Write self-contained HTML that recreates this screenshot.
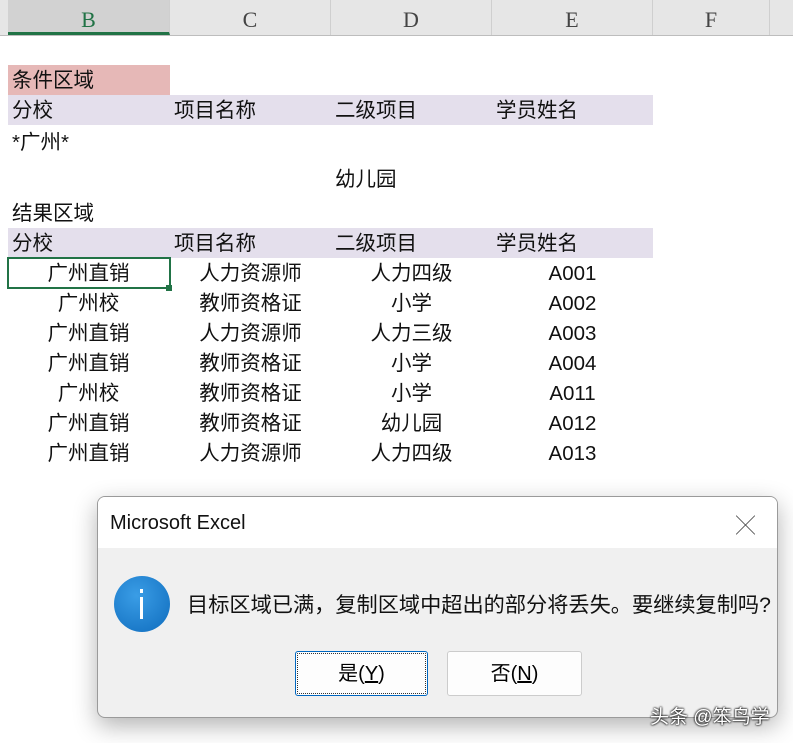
<!DOCTYPE html><html><head><meta charset="utf-8"><style>
body{margin:0;width:793px;height:743px;background:#fff;position:relative;overflow:hidden;font-family:"Liberation Sans","Noto Sans CJK SC",sans-serif;}
.hdr{position:absolute;top:0;left:0;width:793px;height:35px;background:#e6e6e6;border-bottom:1px solid #bdbdbd}
.h{position:absolute;top:0;height:35px;line-height:40px;text-align:center;font-family:"Liberation Serif",serif;font-size:22px;color:#444;border-right:1px solid #cfcfcf;box-sizing:border-box}
.c{position:absolute;height:30px;line-height:32px;font-size:20.5px;color:#111;white-space:nowrap}
.band{position:absolute;height:30px}
.ctr{text-align:center}
</style></head><body>
<div class="hdr"></div>
<div class="h" style="left:8px;width:162px;background:#d2d2d2;color:#217346;border-bottom:3px solid #217346;height:35px">B</div>
<div class="h" style="left:170px;width:161px">C</div>
<div class="h" style="left:331px;width:161px">D</div>
<div class="h" style="left:492px;width:161px">E</div>
<div class="h" style="left:653px;width:117px">F</div>
<div class="band" style="left:8px;top:65px;width:162px;background:#e6b8b7"></div>
<div class="band" style="left:8px;top:95px;width:645px;background:#e4dfec"></div>
<div class="band" style="left:8px;top:228px;width:645px;background:#e4dfec"></div>
<div class="c" style="left:12px;top:65px">条件区域</div>
<div class="c" style="left:12px;top:95px">分校</div><div class="c" style="left:174px;top:95px">项目名称</div><div class="c" style="left:335px;top:95px">二级项目</div><div class="c" style="left:496px;top:95px">学员姓名</div>
<div class="c" style="left:12px;top:127px">*广州*</div>
<div class="c" style="left:335px;top:164px">幼儿园</div>
<div class="c" style="left:12px;top:198px">结果区域</div>
<div class="c" style="left:12px;top:228px">分校</div><div class="c" style="left:174px;top:228px">项目名称</div><div class="c" style="left:335px;top:228px">二级项目</div><div class="c" style="left:496px;top:228px">学员姓名</div>
<div style="position:absolute;left:7px;top:257px;width:164px;height:32px;border:2px solid #217346;box-sizing:border-box"></div>
<div style="position:absolute;left:166px;top:285px;width:6px;height:6px;background:#217346"></div>
<div id="rows"></div>
<script>
var d=[["广州直销","人力资源师","人力四级","A001"],["广州校","教师资格证","小学","A002"],["广州直销","人力资源师","人力三级","A003"],["广州直销","教师资格证","小学","A004"],["广州校","教师资格证","小学","A011"],["广州直销","教师资格证","幼儿园","A012"],["广州直销","人力资源师","人力四级","A013"]];
var L=[8,170,331,492],h="";
d.forEach(function(r,i){r.forEach(function(t,j){h+='<div class="c ctr" style="left:'+L[j]+'px;width:161px;top:'+(258+i*30)+'px">'+t+'</div>'})});
document.getElementById('rows').innerHTML=h;
</script>
<div style="position:absolute;left:97px;top:496px;width:679px;height:220px;border:1px solid #9a9a9a;border-radius:8px;background:#f0f0f0;box-shadow:0 8px 24px rgba(0,0,0,.3);overflow:hidden">
<div style="height:51px;background:#fff;font-size:20px;line-height:52px;padding-left:12px;color:#111">Microsoft Excel</div>
<div style="position:absolute;right:22px;top:14px;font-size:19px;color:#333;font-weight:300">╳</div>
<div style="position:absolute;left:16px;top:79px;width:56px;height:56px;border-radius:50%;background:radial-gradient(circle at 40% 35%,#3a9de6,#0f6cbd)"></div>
<div style="position:absolute;left:42px;top:92px;width:3px;height:4px;background:#fff"></div>
<div style="position:absolute;left:42px;top:100px;width:3px;height:22px;background:#fff"></div>
<div style="position:absolute;left:89px;top:91px;font-size:21.2px;color:#111;white-space:nowrap">目标区域已满，复制区域中超出的部分将丢失。要继续复制吗?</div>
<div style="position:absolute;left:197px;top:154px;width:131px;height:43px;border:1px solid #0067c0;outline:1px dotted #333;outline-offset:-3px;background:#fdfdfd;border-radius:3px;text-align:center;line-height:45px;font-size:20px">是(<u>Y</u>)</div>
<div style="position:absolute;left:349px;top:154px;width:133px;height:43px;border:1px solid #ccc;background:#fdfdfd;border-radius:3px;text-align:center;line-height:45px;font-size:20px">否(<u>N</u>)</div>
</div>
<div style="position:absolute;left:650px;top:702px;font-size:19px;color:#fff;text-shadow:0 0 2px #000,0 0 2px #000">头条 @笨鸟学</div>
</body></html>
